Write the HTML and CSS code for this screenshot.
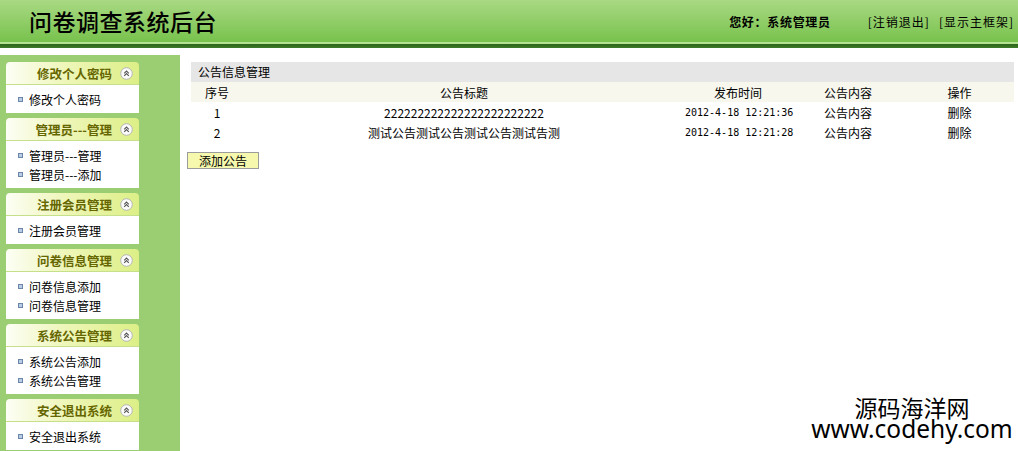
FILE: index.html
```
<!DOCTYPE html>
<html>
<head>
    <title>问卷调查系统后台</title>
    <link rel="stylesheet" href="styles.css">
</head>
<body>
    <div class="top">
        <div class="logo">问卷调查系统后台</div>
        <div class="user">您好：系统管理员</div>
        <div class="links"><a href="#">[注销退出]</a><a href="#">[显示主框架]</a></div>
    </div>
    <div class="top-line"></div>

    <div class="wrap">
        <div class="side">
            <div class="menu">
                <div class="menu-head"><span>修改个人密码</span><svg class="fold" viewBox="0 0 13 13"><circle cx="6.5" cy="6.5" r="5.8"/><path d="M4.2 6.4 L6.5 4.1 L8.8 6.4 M4.2 8.9 L6.5 6.6 L8.8 8.9"/></svg></div>
                <ul class="menu-body">
                    <li>修改个人密码</li>
                </ul>
            </div>
            <div class="menu">
                <div class="menu-head"><span>管理员---管理</span><svg class="fold" viewBox="0 0 13 13"><circle cx="6.5" cy="6.5" r="5.8"/><path d="M4.2 6.4 L6.5 4.1 L8.8 6.4 M4.2 8.9 L6.5 6.6 L8.8 8.9"/></svg></div>
                <ul class="menu-body">
                    <li>管理员---管理</li>
                    <li>管理员---添加</li>
                </ul>
            </div>
            <div class="menu">
                <div class="menu-head"><span>注册会员管理</span><svg class="fold" viewBox="0 0 13 13"><circle cx="6.5" cy="6.5" r="5.8"/><path d="M4.2 6.4 L6.5 4.1 L8.8 6.4 M4.2 8.9 L6.5 6.6 L8.8 8.9"/></svg></div>
                <ul class="menu-body">
                    <li>注册会员管理</li>
                </ul>
            </div>
            <div class="menu">
                <div class="menu-head"><span>问卷信息管理</span><svg class="fold" viewBox="0 0 13 13"><circle cx="6.5" cy="6.5" r="5.8"/><path d="M4.2 6.4 L6.5 4.1 L8.8 6.4 M4.2 8.9 L6.5 6.6 L8.8 8.9"/></svg></div>
                <ul class="menu-body">
                    <li>问卷信息添加</li>
                    <li>问卷信息管理</li>
                </ul>
            </div>
            <div class="menu">
                <div class="menu-head"><span>系统公告管理</span><svg class="fold" viewBox="0 0 13 13"><circle cx="6.5" cy="6.5" r="5.8"/><path d="M4.2 6.4 L6.5 4.1 L8.8 6.4 M4.2 8.9 L6.5 6.6 L8.8 8.9"/></svg></div>
                <ul class="menu-body">
                    <li>系统公告添加</li>
                    <li>系统公告管理</li>
                </ul>
            </div>
            <div class="menu">
                <div class="menu-head"><span>安全退出系统</span><svg class="fold" viewBox="0 0 13 13"><circle cx="6.5" cy="6.5" r="5.8"/><path d="M4.2 6.4 L6.5 4.1 L8.8 6.4 M4.2 8.9 L6.5 6.6 L8.8 8.9"/></svg></div>
                <ul class="menu-body">
                    <li>安全退出系统</li>
                </ul>
            </div>
        </div>

        <div class="main">
            <div class="title-bar">公告信息管理</div>
            <table class="list">
                <tr class="head">
                    <td class="c1">序号</td>
                    <td class="c2">公告标题</td>
                    <td class="c3">发布时间</td>
                    <td class="c4">公告内容</td>
                    <td class="c5">操作</td>
                </tr>
                <tr>
                    <td>1</td>
                    <td>222222222222222222222222</td>
                    <td class="date">2012-4-18 12:21:36</td>
                    <td>公告内容</td>
                    <td>删除</td>
                </tr>
                <tr>
                    <td>2</td>
                    <td>测试公告测试公告测试公告测试告测</td>
                    <td class="date">2012-4-18 12:21:28</td>
                    <td>公告内容</td>
                    <td>删除</td>
                </tr>
            </table>
            <button class="btn">添加公告</button>
        </div>
    </div>

    <div class="mark">
        <div class="mark-cn">源码海洋网</div>
        <div class="mark-url">www.codehy.com</div>
    </div>
</body>
</html>
```

FILE: styles.css
```
body {
    margin: 0;
    font-family: "Noto Sans CJK SC", "Noto Sans", sans-serif;
    font-size: 12px;
    color: #000;
    background: #fff;
    height: 451px;
    overflow: hidden;
}

.top {
    height: 42px;
    display: flex;
    align-items: center;
    background: linear-gradient(#a9d983, #78c24d);
    border-bottom: 2px solid #b2e18f;
}
.logo {
    margin-left: 29px;
    font-size: 23px;
    letter-spacing: 0.5px;
    font-weight: 500;
    flex: 1;
}
.user {
    font-weight: bold;
    letter-spacing: 0.7px;
    margin-right: 37px;
}
.links a {
    color: #000;
    text-decoration: none;
    letter-spacing: 1px;
    margin-right: 9px;
}
.links a:last-child {
    margin-right: 4px;
}

.top-line {
    height: 4px;
    background: linear-gradient(#2a6418, #3d7a27);
    margin-bottom: 7px;
}

.wrap {
    display: flex;
    height: 396px;
}

.side {
    width: 133px;
    background: #9bcd72;
    padding: 7px 41px 0 6px;
}
.menu {
    margin-bottom: 5px;
}
.menu-head {
    height: 23px;
    box-sizing: border-box;
    display: flex;
    align-items: center;
    justify-content: flex-end;
    padding-right: 6px;
    border-radius: 4px 4px 0 0;
    background: linear-gradient(90deg, #fdfef5 0%, #eef6b8 45%, #dcef86 100%);
    border-bottom: 1px solid #c6df8a;
    color: #666600;
    font-weight: bold;
    font-size: 12.5px;
}
.menu-head span {
    margin-right: 8px;
}
.fold {
    width: 13px;
    height: 13px;
}
.fold circle {
    fill: #fbfbfb;
    stroke: #b5b5b5;
    stroke-width: 1;
}
.fold path {
    fill: none;
    stroke: #555;
    stroke-width: 1.1;
}
.menu-body {
    list-style: none;
    margin: 0;
    padding: 5px 0 4px 23px;
    background: #fff;
}
.menu-body li {
    height: 19px;
    line-height: 19px;
    position: relative;
}
.menu-body li::before {
    content: "";
    position: absolute;
    left: -11px;
    top: 7px;
    width: 3px;
    height: 3px;
    border: 1px solid #6d86a8;
    background: #b7cde8;
}

.main {
    flex: 1;
    padding: 7px 4px 0 7px;
}
.title-bar {
    margin-left: 4px;
    height: 20px;
    line-height: 20px;
    padding-left: 7px;
    background: #e6e6e6;
}
.list {
    margin-left: 4px;
    width: 823px;
    border-collapse: collapse;
    table-layout: fixed;
}
.list td {
    height: 20px;
    padding: 0;
    text-align: center;
    white-space: nowrap;
}
.list .head td {
    background: #f7f7ee;
}
.c1 { width: 52px; }
.c2 { width: 442px; }
.c3 { width: 106px; }
.c4 { width: 114px; }
.c5 { width: 109px; }
.list .date {
    font-family: "DejaVu Sans Mono", monospace;
    font-size: 10px;
}

.btn {
    margin-top: 10px;
    width: 72px;
    height: 17px;
    padding: 0;
    font-family: "Noto Sans CJK SC", sans-serif;
    font-size: 12px;
    line-height: 15px;
    background: #f6f9ad;
    border: 1px solid #9c9c9c;
}

.mark {
    position: absolute;
    left: 792px;
    top: 396px;
    width: 240px;
    text-align: center;
}
.mark-cn {
    font-size: 23px;
    height: 22px;
    line-height: 22px;
}
.mark-url {
    font-family: "Noto Sans", sans-serif;
    font-size: 24.5px;
    height: 22px;
    line-height: 22px;
}
```
